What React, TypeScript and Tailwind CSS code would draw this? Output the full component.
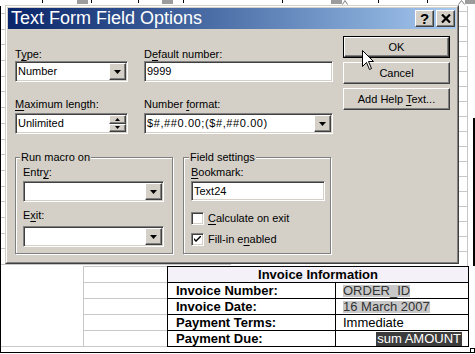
import type { ReactNode } from "react";

const sunken =
  "border border-t-[#808080] border-l-[#808080] border-r-white border-b-white bg-white shadow-[inset_1px_1px_0_#404040,inset_-1px_-1px_0_#d4d0c8]";
const raised =
  "border border-t-white border-l-white border-r-[#404040] border-b-[#404040] bg-[#d4d0c8] shadow-[inset_-1px_-1px_0_#808080]";
const etched =
  "border border-[#808080] shadow-[inset_1px_1px_0_#fff,1px_1px_0_#fff]";

function U({ children }: { children: ReactNode }) {
  return <span className="underline underline-offset-[2px]">{children}</span>;
}

function DownArrow() {
  return (
    <svg width="7" height="4" viewBox="0 0 7 4">
      <path d="M0 0h7L3.5 4z" fill="#000" />
    </svg>
  );
}

function Field({
  className,
  value,
  drop = false,
  spin = false,
}: {
  className: string;
  value?: string;
  drop?: boolean;
  spin?: boolean;
}) {
  return (
    <div className={`flex p-px ${sunken} ${className}`}>
      <div className="flex flex-1 items-center overflow-hidden whitespace-nowrap pl-px text-[11px] leading-[13px]">
        {value}
      </div>
      {drop && (
        <div className={`flex w-[17px] items-center justify-center ${raised}`}>
          <DownArrow />
        </div>
      )}
      {spin && (
        <div className="flex w-[17px] flex-col">
          <div className={`flex flex-1 items-center justify-center ${raised}`}>
            <svg width="5" height="3" viewBox="0 0 5 3">
              <path d="M0 3h5L2.5 0z" fill="#000" />
            </svg>
          </div>
          <div className={`flex flex-1 items-center justify-center ${raised}`}>
            <svg width="5" height="3" viewBox="0 0 5 3">
              <path d="M0 0h5L2.5 3z" fill="#000" />
            </svg>
          </div>
        </div>
      )}
    </div>
  );
}

function Label({ children, className = "" }: { children: ReactNode; className?: string }) {
  return <div className={`h-[13px] text-[11px] leading-[13px] whitespace-nowrap ${className}`}>{children}</div>;
}

function Button({ children, primary = false }: { children: ReactNode; primary?: boolean }) {
  if (primary) {
    return (
      <div className="h-[22px] w-[107px] border border-black">
        <div className={`flex h-full items-center justify-center text-[11px] ${raised}`}>
          <span>{children}</span>
        </div>
      </div>
    );
  }
  return (
    <div className={`flex h-[22px] w-[107px] items-center justify-center text-[11px] ${raised}`}>
      <span>{children}</span>
    </div>
  );
}

function Check({ checked = false, children }: { checked?: boolean; children: ReactNode }) {
  return (
    <div className="flex h-[13px] items-center gap-[4px]">
      <div className={`flex h-[13px] w-[13px] items-center justify-center ${sunken}`}>
        {checked && (
          <svg width="7" height="7" viewBox="0 0 7 7">
            <path d="M0 2v2l2 2 5-5V-1L2 4z" fill="#000" />
          </svg>
        )}
      </div>
      <span className="text-[11px] leading-[13px]">{children}</span>
    </div>
  );
}

function Ruler() {
  const ticks = [42, 91, 138, 183, 282, 378, 427];
  const blocks = [
    ["left-[77px]", "w-[11px]"],
    ["left-[162px]", "w-[11px]"],
    ["left-[331px]", "w-[11px]"],
    ["left-[465px]", "w-[10px]"],
  ];
  return (
    <div className="relative h-[6px]">
      {ticks.map((x) => (
        <div key={x} className="absolute top-0 h-[3px] w-px bg-black" style={{ left: x }} />
      ))}
      {blocks.map(([l, w]) => (
        <div key={l} className={`absolute top-0 h-[4px] bg-[#9c9c9c] ${l} ${w}`} />
      ))}
      <svg className="absolute left-[342px] top-0" width="6" height="5" viewBox="0 0 6 5">
        <path d="M0.5 4.5L3 0.5 5.5 4.5" fill="none" stroke="#808080" />
      </svg>
      <svg className="absolute left-[458px] top-0" width="7" height="5" viewBox="0 0 7 5">
        <path d="M0.5 4.5L3.5 0.5 6.5 4.5" fill="none" stroke="#808080" />
      </svg>
    </div>
  );
}

const rows = [
  { label: "Invoice Number:", value: "ORDER_ID", kind: "field" },
  { label: "Invoice Date:", value: "16 March 2007", kind: "field" },
  { label: "Payment Terms:", value: "Immediate", kind: "plain" },
  { label: "Payment Due:", value: "sum AMOUNT", kind: "dark" },
];

function Dialog() {
  return (
    <div className="absolute left-[5px] top-[5px] h-[259px] w-[454px] border border-t-[#d4d0c8] border-l-[#d4d0c8] border-r-[#404040] border-b-[#404040]">
      <div className="flex h-full flex-col border border-t-white border-l-white border-r-[#808080] border-b-[#808080] bg-[#d4d0c8] p-px text-black">
        {/* title bar */}
        <div className="flex h-[21px] items-center bg-linear-to-r from-[#0a246a] to-[#a6caf0] pl-[3px] pr-[1px]">
          <span className="flex-1 text-[18px] leading-[21px] text-white">Text Form Field Options</span>
          <div className="flex gap-[2px]">
            <div className={`flex h-[17px] w-[19px] items-center justify-center ${raised}`}>
              <span className="text-[15px] font-bold leading-[15px]">?</span>
            </div>
            <div className={`flex h-[17px] w-[19px] items-center justify-center ${raised}`}>
              <svg width="10" height="9" viewBox="0 0 10 9">
                <path d="M1 0.5l8 8M9 0.5l-8 8" stroke="#000" strokeWidth="2.2" />
              </svg>
            </div>
          </div>
        </div>

        <div className="flex">
          <div className="flex w-[323px] flex-col pl-[7px] pt-[19px]">
            <div className="flex gap-[16px]">
              <div className="flex w-[113px] flex-col">
                <Label>
                  T<U>y</U>pe:
                </Label>
                <Field className="h-[21px] w-[113px]" value="Number" drop />
              </div>
              <div className="flex w-[189px] flex-col">
                <Label>
                  D<U>e</U>fault number:
                </Label>
                <Field className="h-[21px] w-[189px]" value="9999" />
              </div>
            </div>
            <div className="mt-[16px] flex gap-[16px]">
              <div className="flex w-[113px] flex-col">
                <Label className="mb-[2px]">
                  <U>M</U>aximum length:
                </Label>
                <Field className="h-[21px] w-[113px]" value="Unlimited" spin />
              </div>
              <div className="flex w-[189px] flex-col">
                <Label className="mb-[2px]">
                  Number <U>f</U>ormat:
                </Label>
                <Field className="h-[21px] w-[189px] tracking-[0.6px]" value="$#,##0.00;($#,##0.00)" drop />
              </div>
            </div>

            <div className="mt-[16px] flex gap-[10px]">
              <fieldset className={`w-[158px] pb-[6px] pl-[7px] pt-[2px] ${etched}`}>
                <legend className="relative -ml-[3px] bg-[#d4d0c8] px-px text-[11px] leading-[14px]">Run macro on</legend>
                <Label className="mb-[2px]">
                  Entr<U>y</U>:
                </Label>
                <Field className="h-[21px] w-[141px]" drop />
                <Label className="mb-[4px] mt-[7px]">
                  E<U>x</U>it:
                </Label>
                <Field className="h-[21px] w-[141px]" drop />
              </fieldset>
              <fieldset className={`w-[148px] pb-[6px] pl-[7px] pt-[2px] ${etched}`}>
                <legend className="relative -ml-[2px] bg-[#d4d0c8] px-px text-[11px] leading-[14px]">Field settings</legend>
                <Label className="mb-[2px]">
                  <U>B</U>ookmark:
                </Label>
                <Field className="h-[20px] w-[134px]" value="Text24" />
                <div className="mt-[11px]">
                  <Check>
                    <U>C</U>alculate on exit
                  </Check>
                </div>
                <div className="mt-[8px]">
                  <Check checked>
                    Fill-in e<U>n</U>abled
                  </Check>
                </div>
              </fieldset>
            </div>
          </div>

          <div className="ml-[12px] flex flex-col gap-[4px] pt-[7px]">
            <Button primary>OK</Button>
            <Button>Cancel</Button>
            <Button>
              Add Help <U>T</U>ext...
            </Button>
          </div>
        </div>
      </div>
    </div>
  );
}

export default function App() {
  return (
    <div className="relative h-[354px] w-[475px] overflow-hidden bg-white font-['Liberation_Sans',Arial,sans-serif] text-black">
      <Ruler />
      <div className="flex h-[347px] w-[475px] flex-col border-b border-l border-black">
        {/* table grid behind the dialog */}
        <div className="flex h-[260px]">
          <div className="flex w-[230px] flex-col overflow-hidden">
            <div className="h-[8px] shrink-0 border-b border-[#c8c8c8]" />
            {Array.from({ length: 16 }).map((_, i) => (
              <div key={i} className="h-[15.7px] shrink-0 border-b border-[#c8c8c8]" />
            ))}
          </div>
          <div className="flex w-[237px] flex-col overflow-hidden border-r border-[#c8c8c8]">
            <div className="h-[6px] shrink-0 border-b border-[#c8c8c8]" />
            {Array.from({ length: 17 }).map((_, i) => (
              <div key={i} className="h-[15px] shrink-0 border-b border-[#c8c8c8]" />
            ))}
          </div>
          <div className="w-[5px]" />
          <div className="mt-[112px] w-[2px] bg-black" />
        </div>

        {/* invoice table */}
        <div className="flex h-[81px]">
          <div className="w-[82px] border-b border-[#c8c8c8]" />
          <div className="flex w-[84px] flex-col border-l border-t border-[#c8c8c8]">
            {Array.from({ length: 5 }).map((_, i) => (
              <div key={i} className="h-[16px] border-b border-[#c8c8c8]" />
            ))}
          </div>
          <div className="flex w-[302px] flex-col border border-black text-[13px] leading-[15px]">
            <div className="flex h-[15px] items-center justify-center bg-[#f4f2f8] font-bold">Invoice Information</div>
            {rows.map((r) => (
              <div key={r.label} className="flex h-[16px] border-t border-black">
                <div className="flex w-[168px] items-center border-r border-black pl-[8px] font-bold">{r.label}</div>
                {r.kind === "dark" ? (
                  <div className="flex flex-1 items-center justify-end pr-[6px]">
                    <span className="bg-[#3c3c3c] px-px leading-[14px] text-white">{r.value}</span>
                  </div>
                ) : (
                  <div className="flex flex-1 items-center pl-[7px]">
                    <span
                      className={
                        r.kind === "field" ? "bg-[#c8c8c8] leading-[12px] text-[#333]" : "leading-[13px]"
                      }
                    >
                      {r.value}
                    </span>
                  </div>
                )}
              </div>
            ))}
          </div>
          <div className="relative flex-1">
            <div className="absolute bottom-[-6px] left-px h-[5px] w-[5px] border border-black bg-white" />
          </div>
        </div>
      </div>

      <Dialog />

      {/* mouse pointer */}
      <svg className="absolute left-[362px] top-[50px]" width="13" height="21" viewBox="0 0 13 21">
        <path d="M0.5 0.5V16.5L4.5 12.5 7.5 19.5 9.5 18.5 6.5 11.5H11.5Z" fill="#fff" stroke="#000" />
      </svg>
    </div>
  );
}
